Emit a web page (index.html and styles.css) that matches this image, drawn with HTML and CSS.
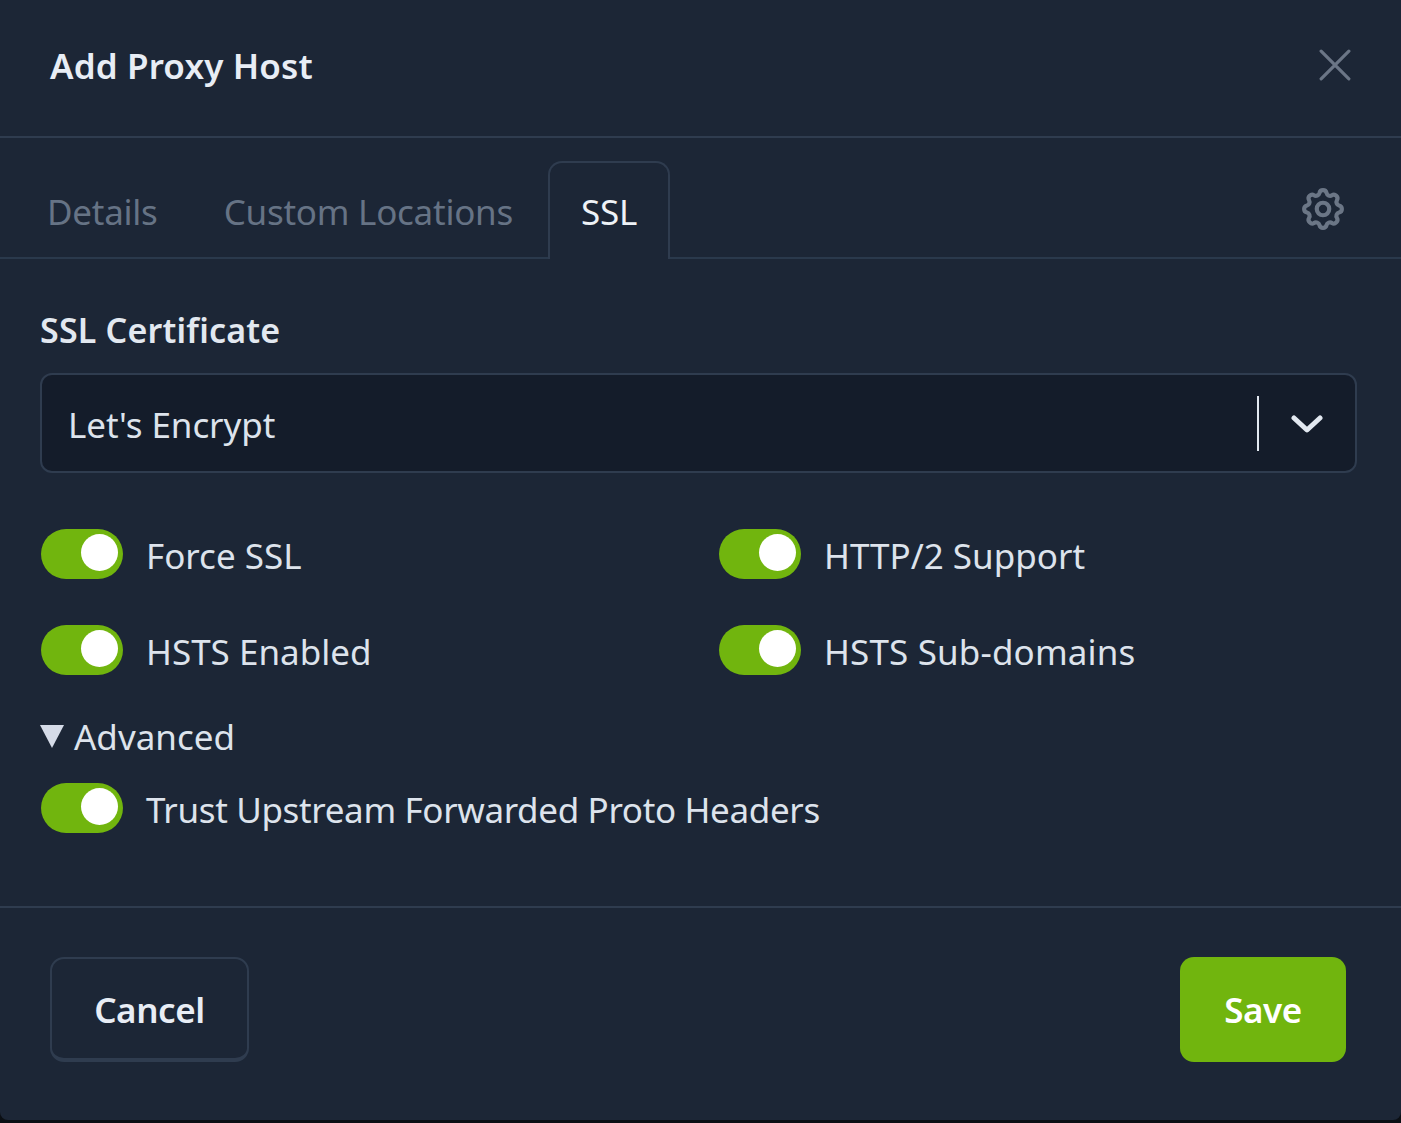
FILE: index.html
```html
<!DOCTYPE html>
<html lang="en">
<head>
  <meta charset="UTF-8" />
  <title>Add Proxy Host</title>
  <link rel="stylesheet" href="styles.css">
</head>
<body>
  <div class="modal">
    <div class="modal-header">
      <div class="modal-title">Add Proxy Host</div>
      <svg class="close-icon" viewBox="0 0 30 30" fill="none" stroke="#6b7686" stroke-width="3" stroke-linecap="round"><path d="M2 2L28 28M28 2L2 28"/></svg>
    </div>

    <div class="tabs">
      <div class="tab tab-details">Details</div>
      <div class="tab tab-locations">Custom Locations</div>
      <div class="tab tab-active">SSL</div>
      <svg class="gear-icon" viewBox="0 0 24 24" fill="none" stroke="#6b7686" stroke-width="2" stroke-linecap="round" stroke-linejoin="round">
        <path d="M10.3 4.3c.4-1.8 3-1.8 3.4 0a1.7 1.7 0 0 0 2.6 1.1c1.5-.9 3.3.8 2.4 2.4a1.7 1.7 0 0 0 1 2.5c1.8.4 1.8 3 0 3.4a1.7 1.7 0 0 0-1 2.6c.9 1.5-.9 3.3-2.4 2.4a1.7 1.7 0 0 0-2.6 1c-.4 1.8-3 1.8-3.4 0a1.7 1.7 0 0 0-2.6-1c-1.5.9-3.3-.9-2.4-2.4a1.7 1.7 0 0 0-1-2.6c-1.8-.4-1.8-3 0-3.4a1.7 1.7 0 0 0 1-2.5c-.9-1.6.9-3.3 2.4-2.4 1 .6 2.3.1 2.6-1.1z"/>
        <circle cx="12" cy="12" r="3"/>
      </svg>
    </div>

    <div class="modal-body">
      <div class="field-label">SSL Certificate</div>
      <div class="select-box">
        <div class="select-value">Let's Encrypt</div>
        <div class="select-sep"></div>
        <svg class="chevron-icon" viewBox="0 0 32 20" fill="none" stroke="#e2e8f0" stroke-width="5" stroke-linecap="round" stroke-linejoin="round"><path d="M3 4L16 16L29 4"/></svg>
      </div>

      <div class="switch-grid">
        <div class="switch-row">
          <div class="switch"><div class="knob"></div></div>
          <span class="switch-text">Force SSL</span>
        </div>
        <div class="switch-row">
          <div class="switch"><div class="knob"></div></div>
          <span class="switch-text">HTTP/2 Support</span>
        </div>
        <div class="switch-row">
          <div class="switch"><div class="knob"></div></div>
          <span class="switch-text">HSTS Enabled</span>
        </div>
        <div class="switch-row">
          <div class="switch"><div class="knob"></div></div>
          <span class="switch-text switch-text-wide">HSTS Sub-domains</span>
        </div>
      </div>

      <div class="advanced">
        <span class="triangle"></span>
        <span>Advanced</span>
      </div>
      <div class="switch-row">
        <div class="switch"><div class="knob"></div></div>
        <span class="switch-text switch-text-long">Trust Upstream Forwarded Proto Headers</span>
      </div>
    </div>

    <div class="modal-footer">
      <div class="btn btn-cancel">Cancel</div>
      <div class="btn btn-save">Save</div>
    </div>
  </div>
</body>
</html>
```

FILE: styles.css
```css
* {
  box-sizing: border-box;
}

html, body {
  margin: 0;
  padding: 0;
  height: 100%;
}

body {
  background: #0b0f14;
  font-family: 'Noto Sans', 'Open Sans', sans-serif;
  color: #e2e8f0;
  overflow: hidden;
}

.modal {
  width: 1401px;
  height: 1120px;
  background: #1c2636;
  border-radius: 0 0 8px 8px;
}

.modal-header {
  height: 138px;
  padding: 0 50px;
  display: flex;
  align-items: center;
  justify-content: space-between;
  border-bottom: 2px solid #2f3c4f;
}

.modal-title {
  font-size: 35px;
  font-weight: 600;
  letter-spacing: 0.15px;
  color: #e8edf5;
  margin-top: -6px;
}

.close-icon {
  width: 32px;
  height: 32px;
  margin-top: -7px;
}

.tabs {
  height: 121px;
  padding: 23px 47px 0;
  display: flex;
  align-items: stretch;
  border-bottom: 2px solid #2a394c;
}

.tab {
  font-size: 35px;
  letter-spacing: -0.25px;
  color: #667385;
  display: flex;
  align-items: center;
  padding-top: 4px;
}

.tab-locations {
  margin-left: 66px;
}

.tab-active {
  margin-left: 35px;
  margin-bottom: -2px;
  width: 122px;
  padding-top: 0;
  justify-content: center;
  color: #eef2f7;
  background: #1c2636;
  border: 2px solid #2f3c4f;
  border-bottom: none;
  border-radius: 14px 14px 0 0;
}

.gear-icon {
  width: 50px;
  height: 50px;
  align-self: center;
  margin-left: auto;
  margin-right: 6px;
}

.modal-body {
  height: 647px;
  padding: 48px 44px 0 40px;
}

.field-label {
  font-size: 34px;
  font-weight: 600;
  letter-spacing: 0.2px;
  line-height: 46px;
  color: #e2e8f0;
  margin-bottom: 20px;
}

.select-box {
  height: 100px;
  display: flex;
  align-items: center;
  padding: 0 26px;
  background: #141c2a;
  border: 2px solid #2f3c4f;
  border-radius: 12px;
}

.select-value {
  flex: 1;
  font-size: 35px;
  letter-spacing: -0.1px;
  color: #dde3ec;
  margin-top: 3px;
}

.select-sep {
  width: 2px;
  height: 55px;
  background: #e2e8f0;
  margin-right: 32px;
}

.chevron-icon {
  width: 32px;
  height: 20px;
  margin-right: 6px;
  margin-top: 2px;
}

.switch-grid {
  display: grid;
  grid-template-columns: 678px 1fr;
  row-gap: 46px;
  margin-top: 56px;
}

.switch-row {
  display: flex;
  align-items: center;
  height: 50px;
  padding-left: 1px;
}

.switch {
  width: 82px;
  height: 50px;
  border-radius: 25px;
  background: #71b50e;
  padding: 5px 5px 0 0;
  display: flex;
  justify-content: flex-end;
  flex-shrink: 0;
}

.knob {
  width: 37px;
  height: 37px;
  border-radius: 50%;
  background: #fff;
}

.switch-text {
  margin-left: 23px;
  font-size: 35px;
  letter-spacing: 0;
  color: #dde3ec;
  margin-top: 2px;
}

.switch-text-wide {
  letter-spacing: 0.15px;
}

.switch-text-long {
  letter-spacing: -0.35px;
}

.advanced {
  display: flex;
  align-items: center;
  gap: 10px;
  font-size: 35px;
  letter-spacing: 0;
  color: #dde3ec;
  height: 48px;
  margin-top: 37px;
  margin-bottom: 23px;
}

.triangle {
  width: 0;
  height: 0;
  border-left: 12px solid transparent;
  border-right: 12px solid transparent;
  border-top: 23px solid #d5dbe8;
}

.modal-footer {
  height: 214px;
  border-top: 2px solid #2f3c4f;
  padding: 49px 55px 0 50px;
  display: flex;
  justify-content: space-between;
  align-items: flex-start;
}

.btn {
  height: 105px;
  display: flex;
  align-items: center;
  justify-content: center;
  font-size: 35px;
  font-weight: 600;
  letter-spacing: -0.4px;
  border-radius: 14px;
}

.btn-cancel {
  width: 199px;
  color: #e8edf5;
  border: 2px solid #2f3c4f;
  border-bottom-width: 4px;
  padding-top: 2px;
}

.btn-save {
  width: 166px;
  color: #fff;
  background: #71b50e;
}
```
